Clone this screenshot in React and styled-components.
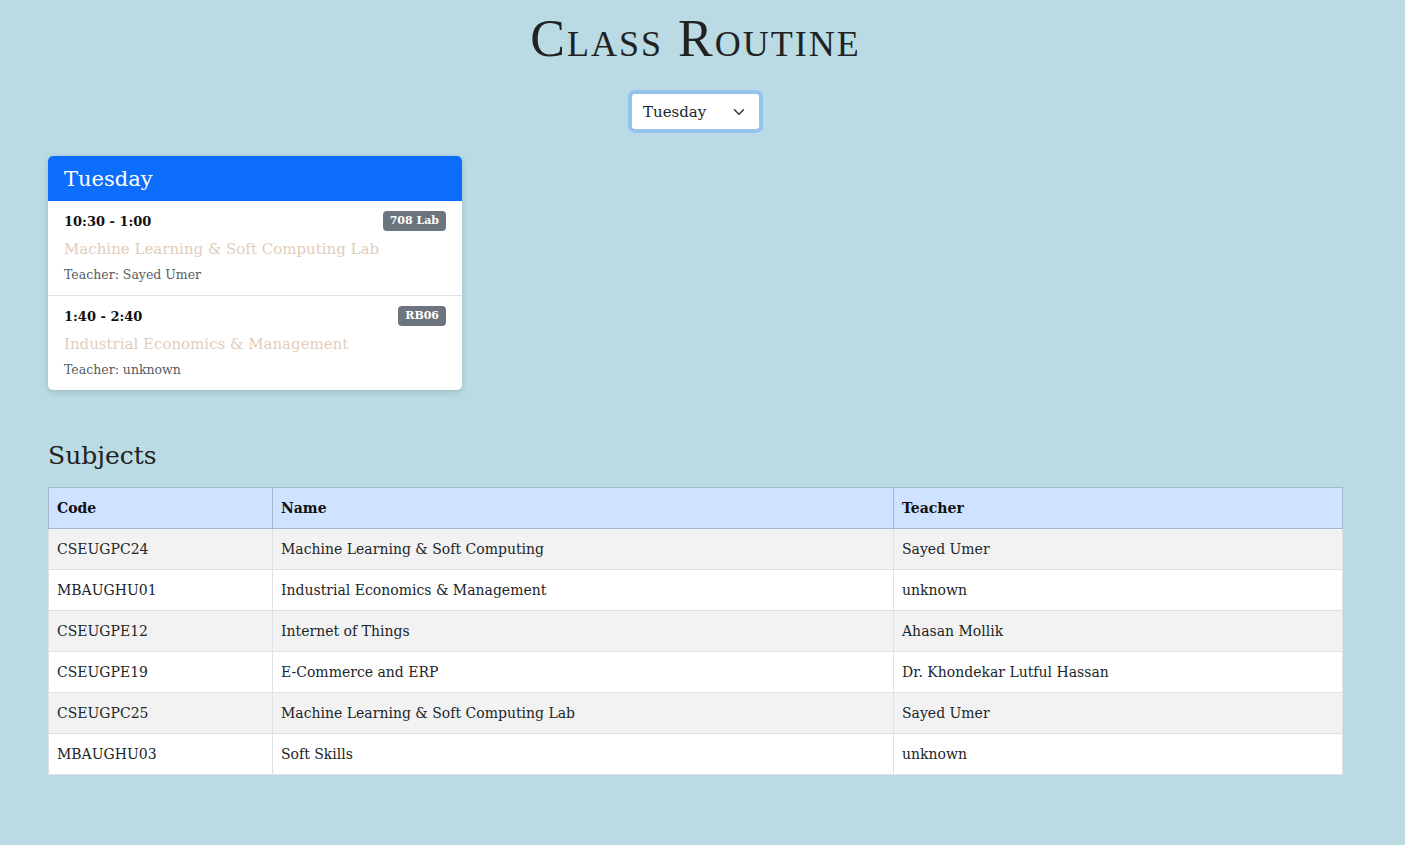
import React, { useState } from "react";
import styled, { createGlobalStyle } from "styled-components";

const routine = {
  Tuesday: [
    { time: "10:30 - 1:00", room: "708 Lab", subject: "Machine Learning & Soft Computing Lab", teacher: "Sayed Umer" },
    { time: "1:40 - 2:40", room: "RB06", subject: "Industrial Economics & Management", teacher: "unknown" },
  ],
};

const subjects = [
  ["CSEUGPC24", "Machine Learning & Soft Computing", "Sayed Umer"],
  ["MBAUGHU01", "Industrial Economics & Management", "unknown"],
  ["CSEUGPE12", "Internet of Things", "Ahasan Mollik"],
  ["CSEUGPE19", "E-Commerce and ERP", "Dr. Khondekar Lutful Hassan"],
  ["CSEUGPC25", "Machine Learning & Soft Computing Lab", "Sayed Umer"],
  ["MBAUGHU03", "Soft Skills", "unknown"],
];

const GlobalStyle = createGlobalStyle`
  body {
    margin: 0;
    background: #badbe3;
    font-family: "DejaVu Serif", "Liberation Serif", serif;
    color: #212529;
  }
  * { box-sizing: border-box; }
`;

const Page = styled.div`
  width: 1295px;
  margin-left: 48px;
  padding-top: 10px;
  padding-bottom: 70px;
`;

const Title = styled.h1`
  margin: 0;
  text-align: center;
  font-family: "Liberation Serif", serif;
  font-variant: small-caps;
  font-weight: 400;
  font-size: 52px;
  letter-spacing: 2px;
  line-height: 58px;
  color: #222;
`;

const SelectRow = styled.div`
  display: flex;
  justify-content: center;
  margin-top: 22px;
`;

const Select = styled.div`
  width: 135px;
  height: 43px;
  border: 4px solid #94c3ef;
  border-radius: 7px;
  background: #fff;
  display: flex;
  align-items: center;
  justify-content: space-between;
  padding: 0 14px 0 11px;
  font-size: 15px;
  color: #212529;
`;

const Card = styled.div`
  width: 414px;
  margin-top: 23px;
  background: #fff;
  border-radius: 5px;
  overflow: hidden;
  box-shadow: 0 2px 6px rgba(0, 0, 0, 0.15);
`;

const CardHeader = styled.div`
  background: #0d6efd;
  color: #fff;
  height: 45px;
  padding: 0 16px;
  display: flex;
  align-items: center;
  font-size: 21px;
`;

const Item = styled.div`
  padding: 9px 16px 10px;
  border-top: ${(p) => (p.$first ? "none" : "1px solid #dee2e6")};
`;

const ItemTop = styled.div`
  display: flex;
  justify-content: space-between;
  align-items: center;
  height: 22px;
`;

const Time = styled.div`
  font-weight: 700;
  font-size: 13px;
  color: #111;
`;

const Badge = styled.span`
  background: #6c757d;
  color: #fff;
  border-radius: 4px;
  font-size: 11px;
  font-weight: 700;
  line-height: 14px;
  padding: 3px 7px;
`;

const SubjectName = styled.div`
  color: #e2cdbb;
  font-size: 15px;
  line-height: 24px;
  margin-top: 5px;
`;

const Teacher = styled.div`
  color: #555c63;
  font-size: 12.5px;
  line-height: 20px;
  margin-top: 4px;
`;

const Heading = styled.h2`
  margin: 49px 0 0;
  font-weight: 400;
  font-size: 25px;
  line-height: 34px;
  color: #222;
`;

const Table = styled.table`
  margin-top: 14px;
  width: 100%;
  border-collapse: collapse;
  font-size: 14px;
`;

const Th = styled.th`
  background: #cfe2ff;
  border: 1px solid #a6b6cf;
  text-align: left;
  font-weight: 700;
  height: 41px;
  padding: 0 8px;
  width: ${(p) => p.$w || "auto"};
  color: #111;
`;

const Tr = styled.tr`
  background: ${(p) => (p.$odd ? "#f2f2f2" : "#fff")};
`;

const Td = styled.td`
  border: 1px solid #dee2e6;
  height: 41px;
  padding: 0 8px;
  color: #212529;
`;

const Chevron = () => (
  <svg width="12" height="12" viewBox="0 0 16 16" fill="none" stroke="#343a40" strokeWidth="2" strokeLinecap="round" strokeLinejoin="round">
    <path d="M2 5l6 6 6-6" />
  </svg>
);

export default function App() {
  const [day] = useState("Tuesday");
  return (
    <>
      <GlobalStyle />
      <Page>
        <Title>Class Routine</Title>
        <SelectRow>
          <Select>
            <span>{day}</span>
            <Chevron />
          </Select>
        </SelectRow>
        <Card>
          <CardHeader>{day}</CardHeader>
          {routine[day].map((c, i) => (
            <Item key={i} $first={i === 0}>
              <ItemTop>
                <Time>{c.time}</Time>
                <Badge>{c.room}</Badge>
              </ItemTop>
              <SubjectName>{c.subject}</SubjectName>
              <Teacher>Teacher: {c.teacher}</Teacher>
            </Item>
          ))}
        </Card>
        <Heading>Subjects</Heading>
        <Table>
          <thead>
            <tr>
              <Th $w="224px">Code</Th>
              <Th $w="621px">Name</Th>
              <Th>Teacher</Th>
            </tr>
          </thead>
          <tbody>
            {subjects.map((s, i) => (
              <Tr key={s[0]} $odd={i % 2 === 0}>
                <Td>{s[0]}</Td>
                <Td>{s[1]}</Td>
                <Td>{s[2]}</Td>
              </Tr>
            ))}
          </tbody>
        </Table>
      </Page>
    </>
  );
}
